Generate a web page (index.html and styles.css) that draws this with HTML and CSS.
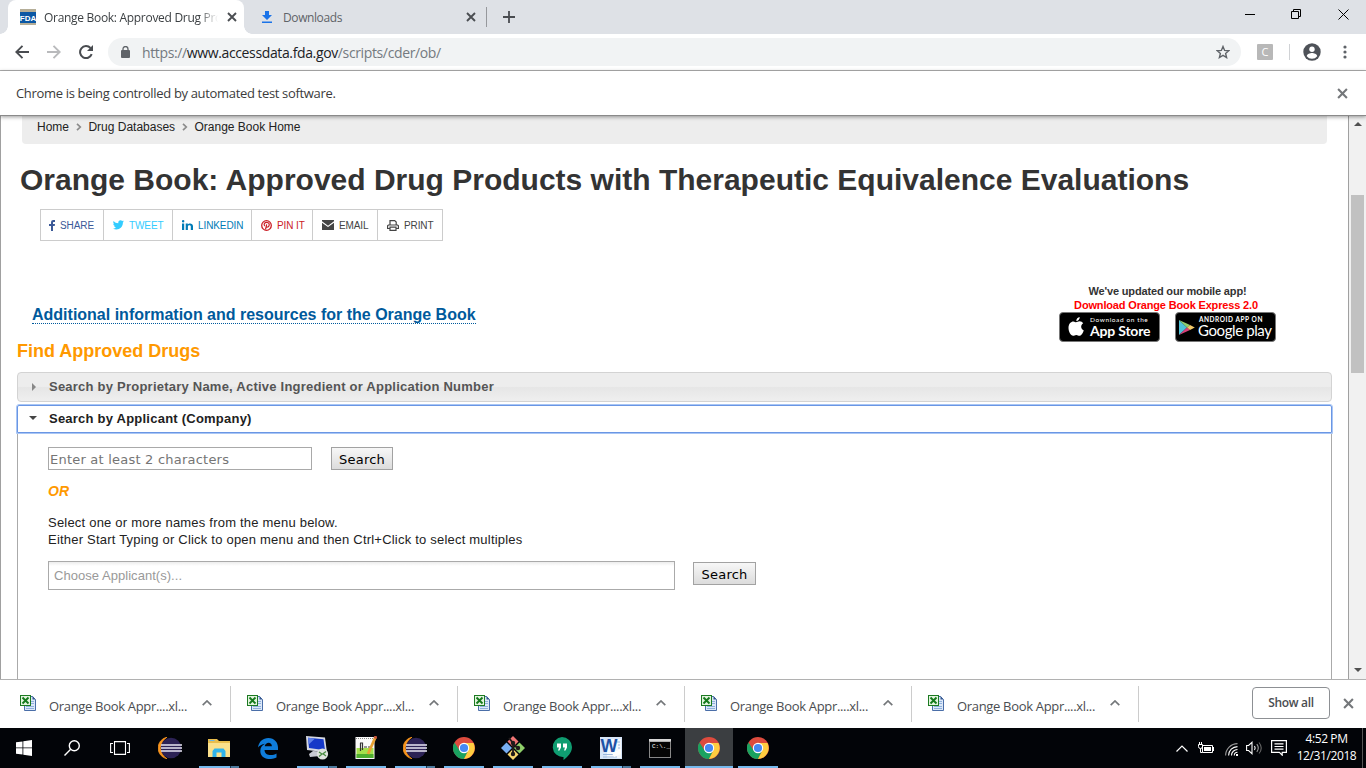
FILE: index.html
```html
<!DOCTYPE html>
<html lang="en">
<head>
<meta charset="utf-8">
<title>Orange Book: Approved Drug Products</title>
<link rel="stylesheet" href="styles.css">
</head>
<body>
<svg class="defs" width="0" height="0" aria-hidden="true">
  <symbol id="close" viewBox="0 0 10 10"><path d="M1 1l8 8M9 1l-8 8" fill="none" stroke="currentColor" stroke-width="1.9"/></symbol>
  <symbol id="xls" viewBox="0 0 16 16">
    <path d="M4.500 1.500h8l3 3v11h-11z" fill="#dce8f8" stroke="#4a6ea8"/><path d="M12.500 1v3.500h3z" fill="#35578f"/>
    <path d="M10 6.500h4M10 8.500h4M6 11.500h8M6 13.500h8" stroke="#8fb0dc"/>
    <rect x=".5" y=".5" width="10" height="10" fill="#e4f5df" stroke="#1c7a22"/>
    <path d="M2.500 2.500l6 6M8.500 2.500l-6 6" stroke="#157a1c" stroke-width="1.900"/>
  </symbol>
  <symbol id="up" viewBox="0 0 10 6"><path d="M.7 5.200L5 1l4.300 4.200" fill="none" stroke="currentColor" stroke-width="1.700"/></symbol>
  <symbol id="eclipse" viewBox="0 0 24 22">
    <path d="M9 .2A11 11 0 0 0 9 21.800A12.500 12.500 0 0 1 9 .2z" fill="#f7941e" stroke="#f7941e" stroke-width=".8"/>
    <circle cx="13" cy="11" r="10.300" fill="#2c2255"/>
    <path d="M3 8h21M3 11h21M3 14h21" stroke="#e8e6f2" stroke-width="1.700"/>
  </symbol>
  <symbol id="chrome" viewBox="0 0 22 22">
    <circle cx="11" cy="11" r="11" fill="#dd4b3e"/>
    <path d="M1.470 5.500A11 11 0 0 0 11 22L15.330 13.500 11 11 6.670 13.500z" fill="#1aa260"/>
    <path d="M11 22A11 11 0 0 0 20.500 6H11v5l4.330 2.500z" fill="#ffcd40"/>
    <circle cx="11" cy="11" r="5.200" fill="#fff"/><circle cx="11" cy="11" r="4.100" fill="#4688f4"/>
  </symbol>
</svg>

<div class="tabstrip">
  <div class="tab active">
    <svg width="16" height="16"><path fill="#b5ae98" d="M0 0h16v16H0z"/><path fill="#0b57a4" d="M0 3h16v11H0z"/><text x="8" y="12" class="fda">FDA</text></svg>
    <span class="tab-title t-ob">Orange Book: Approved Drug Pro</span>
    <svg class="x" width="10" height="10"><use href="#close"/></svg>
  </div>
  <div class="tab second">
    <svg width="10" height="13"><path fill="#1a73e8" d="M3 0h4v4h3L5 9 0 4h3zM0 10.500h10v1.500H0z"/></svg>
    <span class="tab-title t-dl">Downloads</span>
    <svg class="x" width="10" height="10"><use href="#close"/></svg>
  </div>
  <svg class="plus" width="12" height="12"><path d="M6 0v12M0 6h12" stroke="#494c50" stroke-width="1.800"/></svg>
  <div class="winbtns">
    <svg width="10" height="11"><path d="M0 5.500h10" stroke="#000"/></svg>
    <svg width="11" height="11"><path d="M.5 2.500h7v7h-7zM2.500 2.500v-2h7v7h-2" fill="none" stroke="#000"/></svg>
    <svg width="11" height="11"><path d="M.5.5l10 10M10.500.5l-10 10" stroke="#000"/></svg>
  </div>
</div>

<div class="toolbar">
  <svg class="nav" width="14" height="14" fill="none" stroke="#494c50" stroke-width="1.900"><path d="M14 7H1.500M7.500.8L1.300 7l6.200 6.200"/></svg>
  <svg class="nav fwd" width="14" height="14" fill="none" stroke="#b9babc" stroke-width="1.900"><path d="M0 7h12.500M6.500.8L12.700 7l-6.200 6.200"/></svg>
  <svg class="nav rel" width="14" height="14" fill="none" stroke="#494c50" stroke-width="2"><path d="M12.700 9.200A6 6 0 1 1 11.500 3"/><path d="M14 0v6H8z" fill="#494c50" stroke="none"/></svg>
  <div class="omnibox">
    <svg width="9" height="12"><path d="M2 5V3a2.500 2.500 0 0 1 5 0v2" fill="none" stroke="#5f6368" stroke-width="1.300"/><rect y="4" width="9" height="8" rx="1" fill="#5f6368"/></svg>
    <span class="url">https://<b>www.accessdata.fda.gov</b>/scripts/cder/ob/</span>
    <svg class="star" width="14" height="14"><path d="M7 1.500l1.600 3.900 4.200.3-3.200 2.700 1 4.100L7 10.300l-3.600 2.200 1-4.100L1.200 5.700l4.200-.3z" fill="none" stroke="#5f6368" stroke-width="1.400"/></svg>
  </div>
  <span class="ext">C</span>
  <i class="tsep"></i>
  <svg class="user" width="18" height="18"><circle cx="9" cy="9" r="8.700" fill="#4e5258"/><circle cx="9" cy="6.200" r="2.700" fill="#fff"/><path d="M3.800 13.200c0-2 3.400-3.200 5.200-3.200s5.200 1.200 5.200 3.200a6.500 6.500 0 0 1-10.400 0z" fill="#fff"/></svg>
  <svg class="dots" width="4" height="14" fill="#5f6368"><circle cx="2" cy="2" r="1.600"/><circle cx="2" cy="7" r="1.600"/><circle cx="2" cy="12" r="1.600"/></svg>
</div>

<div class="infobar"><span>Chrome is being controlled by automated test software.</span><svg width="11" height="11"><use href="#close"/></svg></div>

<div class="viewport">
  <main class="page">
    <div class="crumbs"><span>Home</span><svg width="6" height="8"><path d="M1 .8L4.300 4 1 7.200" fill="none" stroke="#8b8b8b" stroke-width="1.700"/></svg><span>Drug Databases</span><svg width="6" height="8"><path d="M1 .8L4.300 4 1 7.200" fill="none" stroke="#8b8b8b" stroke-width="1.700"/></svg><span>Orange Book Home</span></div>
    <h1>Orange Book: Approved Drug Products with Therapeutic Equivalence Evaluations</h1>
    <div class="share">
      <span class="s1"><svg width="6" height="11"><path d="M2 11V6H0V4h2V2.500C2 .8 3 0 4.300 0H6v1.900H4.900c-.7 0-.9.300-.9.900V4h2l-.3 2H4v5z" fill="#3b5998"/></svg>SHARE</span>
      <span class="s2"><svg width="11" height="10"><path d="M11 1.200l-1.100 1.300C10 6.500 7 9.500 3.500 9.500 2.200 9.500 1 9.200 0 8.500c1.200.1 2.300-.2 3.200-.9C2.200 7.500 1.400 6.900 1.100 6h1C1 5.700.3 4.800.3 3.700l1 .3C.3 3.200 0 1.900.6.900c1.200 1.400 2.800 2.200 4.700 2.300C5 1.500 6.200.3 7.600.3c.6 0 1.200.3 1.600.7L10.600.5l-.8 1.100z" fill="#33ccff"/></svg>TWEET</span>
      <span class="s3"><svg width="11" height="10" fill="#007bb6"><path d="M0 3.500h2.200V10H0z"/><circle cx="1.100" cy="1.300" r="1.300"/><path d="M3.700 3.500h2.100v.9C6.800 2.900 11 2.800 11 6.300V10H8.800V6.600c0-2-2.900-1.800-2.900 0V10H3.700z"/></svg>LINKEDIN</span>
      <span class="s4"><svg width="11" height="11"><circle cx="5.500" cy="5.500" r="4.800" fill="none" stroke="#cb2027" stroke-width="1.300"/><path d="M3.700 6.100C2.300 3.900 3.800 2.400 5.700 2.400c2.400 0 3 2 2.200 3.500-.6 1.200-1.800 1.500-2.500.8M5.700 4.300L4.500 9.500" fill="none" stroke="#cb2027" stroke-width="1.200"/></svg>PIN IT</span>
      <span class="s5"><svg width="12" height="10" fill="#444"><path d="M0 0h12v1.300L6 5.700 0 1.300z"/><path d="M0 2.700l6 4.400 6-4.400V10H0z"/></svg>EMAIL</span>
      <span class="s6"><svg width="12" height="11" fill="none" stroke="#444" stroke-width="1.200"><path d="M3 5V.6h4.700L9.200 2v3M3 8.500H.6V5.800l.8-.8h9.200l.8.800v2.700H9M3 7.200h6v3.200H3z"/></svg>PRINT</span>
    </div>
    <div class="resource-row">
      <a class="resources">Additional information and resources for the Orange Book</a>
      <div class="apps">
        <span class="upd">We've updated our mobile app!</span><span class="dl">Download Orange Book Express 2.0</span>
        <div class="badges">
          <div class="badge apple">
            <svg width="17" height="20" viewBox="0 0 17 20" fill="#fff"><path d="M8 5.200c1 0 2-.9 3.600-.9 1.500 0 2.800.8 3.600 1.900-3 1.800-2.500 6 .6 7.200-.8 2.200-2.500 5.300-4.300 5.300-1.300 0-1.700-.8-3.200-.8s-2 .8-3.200.8C2.700 18.700.5 14.600.5 11c0-4.500 2.600-6.600 4.900-6.600C6.700 4.400 7.500 5.200 8 5.200z"/><path d="M8.300 4C8.200 2 9.900.2 11.700 0c.2 2.200-1.500 4-3.400 4z"/></svg>
            <div><small>Download on the</small><strong>App Store</strong></div>
          </div>
          <div class="badge google">
            <svg width="16" height="15" viewBox="0 0 16 15"><path fill="#4fc3d9" d="M0 0l8 7.500L0 15z"/><path fill="#8fcf70" d="M0 0l11 5-3 2.500z"/><path fill="#d9407a" d="M0 15l11-5-3-2.500z"/><path fill="#f3c969" d="M11 5l4.800 2.500L11 10 8 7.500z"/></svg>
            <div><small>ANDROID APP ON</small><strong>Google play</strong></div>
          </div>
        </div>
      </div>
    </div>
    <h2>Find Approved Drugs</h2>
    <div class="acc closed"><svg width="4" height="8"><path d="M0 0l4 4-4 4z" fill="#888"/></svg><span>Search by Proprietary Name, Active Ingredient or Application Number</span></div>
    <div class="acc open"><svg width="8" height="4"><path d="M0 0h8L4 4z" fill="#454545"/></svg><span>Search by Applicant (Company)</span></div>
    <div class="panel">
      <div class="row"><div class="field">Enter at least 2 characters</div><div class="btn">Search</div></div>
      <div class="or">OR</div>
      <p class="help">Select one or more names from the menu below.<br>Either Start Typing or Click to open menu and then Ctrl+Click to select multiples</p>
      <div class="row"><div class="chosen">Choose Applicant(s)...</div><div class="btn second-btn">Search</div></div>
    </div>
  </main>
  <div class="scrollbar"><svg width="8" height="4"><path d="M0 4h8L4 0z" fill="#505050"/></svg><i></i><svg class="down" width="8" height="4"><path d="M0 0h8L4 4z" fill="#505050"/></svg></div>
</div>

<div class="shelf">
  <div class="item"><svg width="16" height="16"><use href="#xls"/></svg><span>Orange Book Appr....xl...</span><svg class="chev" width="10" height="6"><use href="#up"/></svg></div>
  <div class="item"><svg width="16" height="16"><use href="#xls"/></svg><span>Orange Book Appr....xl...</span><svg class="chev" width="10" height="6"><use href="#up"/></svg></div>
  <div class="item"><svg width="16" height="16"><use href="#xls"/></svg><span>Orange Book Appr....xl...</span><svg class="chev" width="10" height="6"><use href="#up"/></svg></div>
  <div class="item"><svg width="16" height="16"><use href="#xls"/></svg><span>Orange Book Appr....xl...</span><svg class="chev" width="10" height="6"><use href="#up"/></svg></div>
  <div class="item"><svg width="16" height="16"><use href="#xls"/></svg><span>Orange Book Appr....xl...</span><svg class="chev" width="10" height="6"><use href="#up"/></svg></div>
  <div class="showall"><span>Show all</span></div>
  <svg class="x" width="11" height="11"><use href="#close"/></svg>
</div>

<div class="taskbar">
  <div class="sys"><svg width="16" height="16" fill="#fff"><path d="M0 2.300l6.500-.9v6.100H0zM7.300 1.200L16 0v7.500H7.300zM0 8.300h6.500v6.300L0 13.700zM7.300 8.300H16V16l-8.700-1.200z"/></svg></div>
  <div class="sys"><svg width="16" height="16" fill="none" stroke="#fff" stroke-width="1.400"><circle cx="10.300" cy="5.700" r="5"/><path d="M6.700 9.300L.5 15.500"/></svg></div>
  <div class="sys"><svg width="20" height="14" fill="none" stroke="#fff" stroke-width="1.100"><path d="M4.500.6h11v12.800h-11zM3 2.500H.6v9H3M17 2.500h2.400v9H17"/></svg></div>
  <div class="app first"><svg width="24" height="22"><use href="#eclipse"/></svg></div>
  <div class="app run multi"><svg width="22" height="18"><path fill="#e9bd4c" d="M0 0h9l2 2h11v16H0z"/><path fill="#fbe08b" d="M0 4h22v14H0z"/><path fill="#6fb6e0" d="M1.500 1h5v1h-5z"/><path fill="#30b4ec" d="M4.500 18v-6l2-2.500h9l2 2.500v6h-4v-4.500h-5V18z"/></svg></div>
  <div class="app"><svg width="20" height="21"><path fill="#0f7ddb" d="M0 9.500C1 3.500 5 0 10.300 0 16.500 0 20 4.500 20 9.500V12H6.500c.2 6 8 6 12 3.500v4C11 23 2.300 20.500 2.300 13c0-3.800 2-6 4.700-7.300C3.800 6 1.200 8 0 9.500zM6.700 8.300h7.200c0-4.900-6.400-4.700-7.200 0z"/></svg></div>
  <div class="app run multi"><svg width="24" height="24"><path fill="#d6d9e2" d="M1 0l19 1.500 2 15L2 14z"/><path fill="#1538c8" d="M3 1.800l15.500 1.400 1.500 11L4 12z"/><path fill="#6080e8" d="M3 1.800l7 .7-6.300 6z"/><path fill="#c9cbd3" d="M8 15l7 .6V20l-10 1-1-3z"/><circle cx="17.500" cy="18" r="5.600" fill="#e0e3df"/><path d="M14 16l3 2-3 2.500M21 15.500l-3 2.200 3 2.300" fill="none" stroke="#498b40" stroke-width="1.300"/></svg></div>
  <div class="app run"><svg width="22" height="24"><path fill="#fafafa" d="M.5 1h19v22H.5z"/><path fill="#a5e04c" d="M1.500 12h17v10h-17z"/><path fill="#4eae2f" d="M1.500 18h17v4h-17z"/><path stroke="#888" stroke-dasharray="1 1" d="M1 2.500h18"/><path d="M5.500 7v8M5 7h2.500v7M9 11h3M13 11h3" fill="none" stroke="#333" stroke-width="1.200"/><path d="M20.500 1L13 18" stroke="#e9a233" stroke-width="2.800"/><path d="M21 0l-1 2.500" stroke="#c4543b" stroke-width="3"/></svg></div>
  <div class="app run multi"><svg width="24" height="22"><use href="#eclipse"/></svg></div>
  <div class="app run"><svg width="22" height="22"><use href="#chrome"/></svg></div>
  <div class="app run"><svg width="24" height="24" viewBox="0 -1 24 24"><path fill="#f07575" d="M12-1l5.500 5.500L12 10 6.500 4.500z"/><path fill="#78aef3" d="M5.500 5.500L11 11l-5.500 5.500L0 11z"/><path fill="#8fd06a" d="M18.500 5.500L24 11l-5.500 5.500L13 11z"/><path fill="#f8d66d" d="M12 12l5.500 5.500L12 23l-5.500-5.500z"/><path d="M8 1l4 5v11M12 7l4.500 4" stroke="#201b1b" stroke-width="1.800" fill="none"/><circle cx="12" cy="6" r="2.200" fill="#201b1b"/><circle cx="12" cy="17" r="2.200" fill="#201b1b"/><circle cx="17" cy="11" r="2.200" fill="#201b1b"/></svg></div>
  <div class="app run"><svg width="20" height="23"><path fill="#0f9d71" d="M10 0a10 10 0 0 1 10 10c0 6-5 10.500-8.500 13v-3A10 10 0 1 1 10 0z"/><path fill="#fff" d="M5 6.500h4v4l-1.500 3H6l1-3H5zM11 6.500h4v4l-1.500 3H12l1-3h-2z"/></svg></div>
  <div class="app run multi"><svg width="22" height="22"><path fill="#d8e6f8" d="M0 0h22v22H0z"/><path fill="#f5f8fd" d="M7 2h14v19H7z"/><path stroke="#9bb8de" d="M17 5h3M18 8h2M18 11h2M3 17.500h14M3 20h14"/><text x="9" y="14.500" class="word">W</text><path d="M12 16l9-4v5l-7 3z" fill="#fff"/></svg></div>
  <div class="app run"><svg width="22" height="19"><path fill="#888" d="M0 0h22v19H0z"/><path fill="#d8d8d8" d="M0 0h22v2.500H0z"/><path fill="#050505" d="M1 3h20v15H1z"/><text x="3" y="9" class="cmd">C:\._</text></svg></div>
  <div class="app run current"><svg width="22" height="22"><use href="#chrome"/></svg></div>
  <div class="app run"><svg width="22" height="22"><use href="#chrome"/></svg></div>
  <div class="tray">
    <svg width="12" height="7"><path d="M.5 6.500L6 1l5.500 5.500" fill="none" stroke="#fff" stroke-width="1.200"/></svg>
    <svg class="bat" width="17" height="12" fill="none" stroke="#fff"><path d="M4.500 3.500h10v7h-10zM15.500 5v4M.5 2.500h4v2a2 2 0 0 1-4 0zM1.500 0v2M3.500 0v2M2.500 6.500v4h2"/><path fill="#fff" stroke="none" d="M6 5h7v4H6z"/></svg>
    <svg class="wifi" width="13" height="13" fill="none" stroke="#fff" stroke-width="1.100"><path d="M.6 12.500A12 12 0 0 1 12.500.6" stroke="#999"/><path d="M3.600 12.500a9 9 0 0 1 8.900-8.900M6.500 12.500a6 6 0 0 1 6-6M9.300 12.500a3.200 3.200 0 0 1 3.200-3.200"/><path d="M11 11h2v2h-2z" fill="#fff" stroke="none"/></svg>
    <svg class="vol" width="17" height="14" fill="none" stroke="#fff" stroke-width="1.100"><path d="M.6 4.500h2L6 1.300v11.400L2.600 9.500h-2z"/><path d="M8.500 5c.8 1.200.8 2.800 0 4"/><path d="M10.800 3.200c1.800 2.300 1.800 5.300 0 7.600" stroke="#999"/><path d="M13 1.500c2.700 3.300 2.700 7.700 0 11" stroke="#666"/></svg>
    <svg class="note" width="16" height="16" fill="none" stroke="#fff" stroke-width="1.200"><path d="M.6.600h14.800v11.800h-4.200v2.800l-2.800-2.800H.6zM3.500 3.800h9M3.500 6.500h9M3.500 9.200h9"/></svg>
    <div class="clock"><span>4:52 PM</span><span>12/31/2018</span></div>
  </div>
</div>
</body>
</html>
```
FILE: styles.css
```css
* { box-sizing: border-box; }
body { margin: 0; width: 1366px; height: 768px; overflow: hidden; background: #fff; font-family: "Liberation Sans", Arial, sans-serif; color: #333; display: flex; flex-direction: column; }
svg { display: block; flex: none; }
span { white-space: nowrap; }
.defs { position: absolute; }

.tabstrip, .toolbar, .infobar, .shelf, .clock { font-family: "Open Sans", sans-serif; }
.tabstrip { height: 34px; flex: none; background: #dee1e6; display: flex; align-items: center; }
.tab { display: flex; align-items: center; height: 34px; }
.tab.active { position: relative; width: 236px; margin-left: 8px; padding-left: 12px; background: #fff; border-radius: 8px 8px 0 0; }
.tab.active::before, .tab.active::after { content: ""; position: absolute; bottom: 0; width: 8px; height: 8px; }
.tab.active::before { left: -8px; background: radial-gradient(circle at 0 0, #dee1e6 7.5px, #fff 8px); }
.tab.active::after { right: -8px; background: radial-gradient(circle at 100% 0, #dee1e6 7.5px, #fff 8px); }
.tab-title { font-size: 12px; }
.t-ob { width: 175px; margin-left: 8px; color: #3c4043; letter-spacing: -.3px; -webkit-mask-image: linear-gradient(90deg, #000 155px, transparent 174px); mask-image: linear-gradient(90deg, #000 155px, transparent 174px); }
.tab .x { margin-left: 8px; color: #4b4e52; }
.tab.second { width: 243px; padding-left: 18px; border-right: 1px solid #96989c; height: 20px; }
.t-dl { width: 175px; margin-left: 11px; color: #5f6368; letter-spacing: -.4px; }
.second .x { margin-left: 8px; }
.plus { margin-left: 16px; }
.winbtns { margin-left: auto; display: flex; gap: 36px; padding: 0 17px 6px 0; }

.toolbar { height: 37px; flex: none; display: flex; align-items: center; padding-left: 15px; border-bottom: 1px solid #b1b1b1; }
.fwd { margin-left: 18px; }
.rel { margin-left: 18px; }
.omnibox { margin-left: 15px; width: 1133px; height: 28px; border-radius: 14px; background: #f1f3f4; display: flex; align-items: center; padding-left: 13px; }
.url { font-size: 14px; margin-left: 12px; color: #747a80; letter-spacing: -.37px; }
.url b { font-weight: 400; color: #202124; }
.star { margin: 0 11px 0 auto; }
.ext { width: 16px; height: 16px; margin-left: 16px; background: #b8b8b8; color: #fff; font-size: 11px; line-height: 16px; text-align: center; border-radius: 1px; }
.tsep { width: 1px; height: 16px; margin-left: 16px; background: #d0d2d5; }
.user { margin-left: 13px; }
.dots { margin-left: 22px; }

.infobar { height: 45px; flex: none; display: flex; align-items: center; justify-content: space-between; padding: 0 18px 0 16px; border-bottom: 1px solid #8a8a8a; font-size: 13px; letter-spacing: -.33px; color: #3b3b3b; position: relative; box-shadow: 0 1px 4px rgba(0,0,0,.4); background: #fff; }
.infobar svg { color: #74777a; }

.viewport { height: 563px; flex: none; display: flex; border-left: 1px solid #a0a0a0; overflow: hidden; }
.page { width: 1348px; border-right: 1px solid #a0a0a0; padding: 0 16px; display: flex; flex-direction: column; }
.crumbs { margin: 0 5px; height: 28px; flex: none; background: #ededed; border-radius: 0 0 4px 4px; display: flex; align-items: center; gap: 6.7px; padding: 0 0 6px 15px; font-size: 12px; color: #222; }
h1 { margin: 16px 0 0 3px; font-size: 30px; line-height: 40px; height: 40px; flex: none; white-space: nowrap; color: #333; }
.share { display: flex; margin: 9px 0 0 23px; height: 32px; width: 403px; border: 1px solid #ccc; font-size: 10px; letter-spacing: -.1px; flex: none; }
.share span { display: flex; align-items: center; gap: 5px; padding-left: 9px; border-right: 1px solid #ccc; }
.share .s1 { width: 63px; color: #3b5998; padding-left: 8px; }
.share .s2 { width: 69px; color: #3cf; }
.share .s3 { width: 79px; color: #007bb6; }
.share .s4 { width: 61px; color: #cb2027; }
.share .s5 { width: 65px; color: #444; }
.share .s6 { width: 64px; color: #444; border: 0; }
.resource-row { height: 101px; flex: none; display: flex; justify-content: space-between; padding: 43px 56px 0 15px; }
.resources { margin-top: 21px; height: 19px; font-size: 16px; line-height: 20px; font-weight: 700; color: #005a9c; border-bottom: 1px dotted #005a9c; white-space: nowrap; }
.apps { width: 217px; display: flex; flex-direction: column; align-items: center; font-size: 11px; font-weight: 700; line-height: 14px; }
.upd { color: #333; letter-spacing: -.16px; }
.dl { color: #f00; margin-right: 3px; letter-spacing: -.16px; }
.badges { display: flex; gap: 15px; width: 217px; }
.badge { width: 101px; height: 30px; border-radius: 4px; background: #000; border: 1px solid #777; color: #fff; display: flex; align-items: center; padding-left: 8px; gap: 5px; font-family: Lato, sans-serif; white-space: nowrap; }
.badge small, .badge strong { display: block; font-weight: 400; }
.badge small { font-size: 6.5px; line-height: 8px; letter-spacing: .6px; }
.badge strong { font-size: 14px; line-height: 14px; font-weight: 700; letter-spacing: -.2px; }
.google { padding-left: 3px; gap: 3px; }
.google small { letter-spacing: .55px; font-weight: 700; padding-left: 1px; line-height: 7px; }
.google strong { font-weight: 400; font-size: 15px; letter-spacing: -.4px; line-height: 15px; }
h2 { margin: 0; height: 30px; flex: none; font-size: 18px; line-height: 18px; color: #f90; white-space: nowrap; }
.acc { height: 30px; flex: none; display: flex; align-items: center; font-size: 13px; font-weight: 700; letter-spacing: .23px; }
.closed { border: 1px solid #d3d3d3; border-radius: 4px; background: linear-gradient(#ededed 48%, #e6e6e6 52%, #efefef); color: #555; padding-left: 14px; padding-bottom: 1px; }
.closed span { margin-left: 13px; }
.open { margin: 2px 0 0 -1px; width: 1317px; border: 1px solid #a9c6f5; outline: 1px solid #6a96e4; outline-offset: -2px; border-radius: 3px 3px 0 0; color: #212121; padding: 0 0 2px 12px; }
.open span { margin-left: 12px; }
.panel { flex: 1; border: solid #aaa; border-width: 0 1px; padding: 13px 0 0 30px; width: 1315px; }
.row { display: flex; }
.field { width: 264px; height: 23px; border: 1px solid #a9a9a9; font: 13px/23px "DejaVu Sans", sans-serif; letter-spacing: .22px; color: #757575; padding-left: 1px; white-space: nowrap; }
.btn { margin-left: 19px; width: 62px; height: 23px; border: 1px solid #a2a2a2; background: linear-gradient(#f7f7f7, #dcdcdc); font: 13px/23px "DejaVu Sans", sans-serif; letter-spacing: .2px; color: #000; text-align: center; }
.or { margin-top: 13px; height: 17px; font-size: 14px; line-height: 17px; font-weight: 700; font-style: italic; color: #f90; }
.help { margin: 14px 0 13px; font-size: 13px; line-height: 17px; letter-spacing: .21px; color: #222; height: 34px; }
.chosen { width: 627px; height: 29px; border: 1px solid #aaa; background: linear-gradient(#eee 1%, #fff 15%); font-size: 13px; line-height: 27px; letter-spacing: .04px; color: #999; padding-left: 5px; }
.second-btn { margin-left: 18px; margin-top: 1px; width: 63px; }
.scrollbar { width: 17px; background: #f1f1f1; display: flex; flex-direction: column; align-items: center; padding: 6px 0 7px; }
.scrollbar i { width: 13px; height: 178px; margin-top: 69px; background: #c1c1c1; }
.scrollbar .down { margin-top: auto; }

.shelf { height: 49px; flex: none; border-top: 1px solid #b1b1b1; display: flex; align-items: center; background: #fff; }
.item { width: 227px; height: 36px; border-right: 1px solid #ccc; display: flex; align-items: center; padding: 0 0 2px 20px; margin-bottom: 1px; }
.item:first-child { width: 231px; }
.item:not(:first-child) { padding-left: 16px; }
.item span { margin-left: 13px; width: 138px; font-size: 13px; letter-spacing: -.32px; color: #4a4d51; padding-top: 6px; }
.chev { margin-left: 15px; margin-top: 1px; color: #74777a; }
.showall { margin-left: 113px; width: 78px; height: 32px; margin-bottom: 2px; border: 1px solid #8d9094; border-radius: 4px; display: flex; justify-content: center; align-items: center; font-size: 12px; font-weight: 600; letter-spacing: -.3px; color: #4a4d51; padding-bottom: 1px; }
.shelf > .x { margin-left: 13px; margin-bottom: 1px; color: #74777a; }

.taskbar { height: 40px; flex: none; background: #020408; display: flex; }
.sys { width: 48px; display: flex; align-items: center; justify-content: center; }
.app { position: relative; width: 49px; display: flex; align-items: center; justify-content: center; padding-right: 2px; }
.app.first { margin-left: 2px; }
.app.run::after { content: ""; position: absolute; left: 4px; bottom: 0; width: 40px; height: 2px; background: #76b9ed; }
.app.multi::after { background: linear-gradient(90deg, #76b9ed 31px, #1c3850 31px 32px, #4d7a9d 32px); }
.app.current { background: linear-gradient(90deg, #3b3e41 48px, transparent 48px); }
.app.current::after { left: 0; width: 48px; }
.tray { margin-left: auto; display: flex; align-items: center; color: #fff; height: 40px; }
.bat { margin-left: 10px; }
.wifi { margin-left: 10px; margin-top: 2px; }
.vol { margin-left: 8px; }
.note { margin-left: 8px; }
.clock { margin-left: 7px; width: 69px; height: 40px; border-right: 1px solid #555; margin-right: 3px; display: flex; flex-direction: column; align-items: center; padding: 2px 3px 0 0; font-size: 12px; line-height: 17px; letter-spacing: -.4px; }
.fda { font: 700 8px "Liberation Sans", sans-serif; fill: #fff; text-anchor: middle; }
.word { font: 700 18px "Liberation Sans", sans-serif; fill: #1d51a5; text-anchor: middle; }
.cmd { font: 6px "Liberation Mono", monospace; fill: #fff; }
```
